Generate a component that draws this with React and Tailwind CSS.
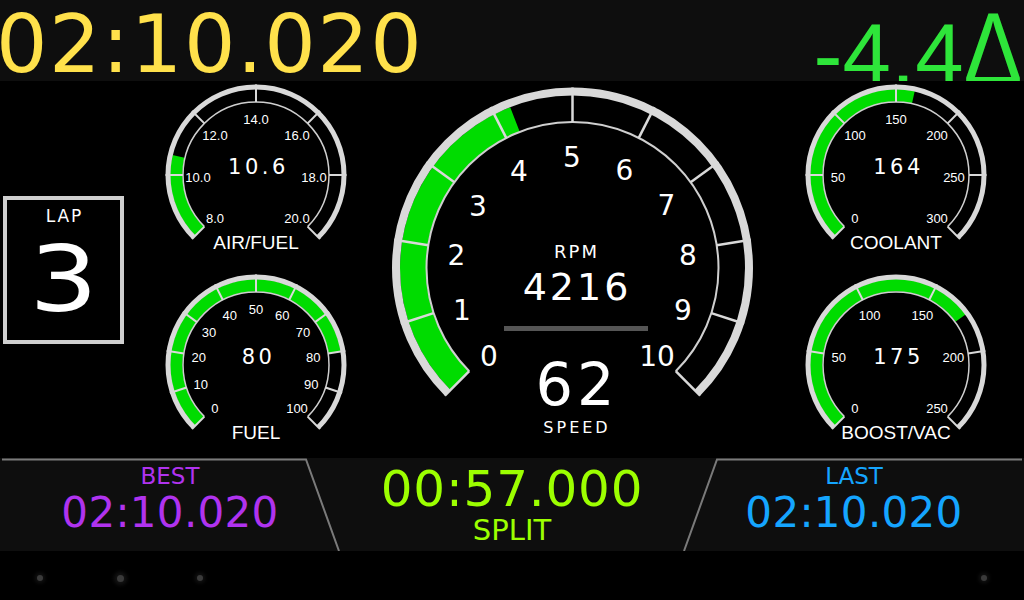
import React from "react";

const DJ = "'DejaVu Sans', sans-serif";
const LS = "'Liberation Sans', Arial, sans-serif";
const GREEN = "#00dc00";
const RIM = "#d9d9d9";
const INNER = "#cfcfcf";

function pt(cx, cy, r, deg) {
  const a = (deg * Math.PI) / 180;
  return [cx + r * Math.sin(a), cy - r * Math.cos(a)];
}
function arcPath(cx, cy, r, a1, a2) {
  const [x1, y1] = pt(cx, cy, r, a1);
  const [x2, y2] = pt(cx, cy, r, a2);
  const large = a2 - a1 > 180 ? 1 : 0;
  return `M${x1} ${y1} A${r} ${r} 0 ${large} 1 ${x2} ${y2}`;
}
function sector(cx, cy, r1, r2, a1, a2) {
  const [ox1, oy1] = pt(cx, cy, r2, a1);
  const [ox2, oy2] = pt(cx, cy, r2, a2);
  const [ix2, iy2] = pt(cx, cy, r1, a2);
  const [ix1, iy1] = pt(cx, cy, r1, a1);
  const large = a2 - a1 > 180 ? 1 : 0;
  return `M${ox1} ${oy1} A${r2} ${r2} 0 ${large} 1 ${ox2} ${oy2} L${ix2} ${iy2} A${r1} ${r1} 0 ${large} 0 ${ix1} ${iy1} Z`;
}

function SmallGauge({ h = 190, labels, frac, value, name }) {
  const cx = 95;
  const cy = 94;
  const n = labels.length - 1;
  const end = -135 + 270 * frac;
  return (
    <svg width="190" height={h} viewBox={`0 0 190 ${h}`} className="block shrink-0">
      <path d={sector(cx, cy, 73.5, 86, -135, end)} fill={GREEN} />
      <path d={arcPath(cx, cy, 88, -135, 135)} stroke={RIM} strokeWidth="5" fill="none" />
      <path d={arcPath(cx, cy, 73, -135, 135)} stroke={INNER} strokeWidth="1.5" fill="none" />
      {labels.map((l, i) => {
        const a = -135 + (270 * i) / n;
        const [x1, y1] = pt(cx, cy, 73, a);
        const [x2, y2] = pt(cx, cy, 90.5, a);
        const [lx, ly] = pt(cx, cy, 58, a);
        return (
          <g key={i}>
            <line x1={x1} y1={y1} x2={x2} y2={y2} stroke={RIM} strokeWidth="2" />
            <text x={lx} y={ly + 2} fill="#fff" fontFamily={LS} fontSize="13" textAnchor="middle" dominantBaseline="central">
              {l}
            </text>
          </g>
        );
      })}
      <text x={cx + 2.5} y={cy - 1.5} fill="#fff" fontFamily={DJ} fontSize="21" letterSpacing="3.5" textAnchor="middle">
        {value}
      </text>
      <text x={cx} y={cy + 74} fill="#fff" fontFamily={LS} fontSize="19" textAnchor="middle">
        {name}
      </text>
    </svg>
  );
}

const RPM_LABELS = [
  [-83.5, 88],
  [-110.5, 42],
  [-116, -12.5],
  [-94.5, -62],
  [-53.5, -97],
  [-0.5, -111],
  [52, -98],
  [94, -62.5],
  [115.5, -13],
  [110.5, 42.7],
  [84.5, 88.7],
];

function RpmGauge() {
  const cx = 185.5;
  const cy = 187;
  const rpm = 4216;
  const end = -135 + 270 * (rpm / 10000);
  return (
    <svg width="370" height="377" viewBox="0 0 370 377" className="block shrink-0">
      <path d={sector(cx, cy, 146.5, 172.5, -135, end)} fill={GREEN} />
      <path d={arcPath(cx, cy, 176.5, -135, 135)} stroke={RIM} strokeWidth="8" fill="none" />
      <path d={arcPath(cx, cy, 146, -135, 135)} stroke={INNER} strokeWidth="2" fill="none" />
      {RPM_LABELS.map(([dx, dy], i) => {
        const a = -135 + 27 * i;
        const [x1, y1] = pt(cx, cy, 146, a);
        const [x2, y2] = pt(cx, cy, 180.5, a);
        return (
          <g key={i}>
            <line x1={x1} y1={y1} x2={x2} y2={y2} stroke={RIM} strokeWidth="2.5" />
            <text x={cx + dx} y={cy + dy} fill="#fff" fontFamily={DJ} fontSize="28" textAnchor="middle" dominantBaseline="central">
              {i}
            </text>
          </g>
        );
      })}
      <text x="189.5" y="177" fill="#fff" fontFamily={DJ} fontSize="18" letterSpacing="2" textAnchor="middle">
        RPM
      </text>
      <text x="190" y="219" fill="#fff" fontFamily={DJ} fontSize="38" letterSpacing="3" textAnchor="middle">
        {rpm}
      </text>
      <rect x="117" y="245" width="144" height="5" fill="#555" />
      <text x="190" y="324" fill="#fff" fontFamily={DJ} fontSize="59" letterSpacing="4" textAnchor="middle">
        62
      </text>
      <text x="190" y="352" fill="#fff" fontFamily={DJ} fontSize="16" letterSpacing="3" textAnchor="middle">
        SPEED
      </text>
    </svg>
  );
}

export default function App() {
  return (
    <div className="w-[1024px] h-[600px] bg-black overflow-hidden flex flex-col font-['DejaVu_Sans',sans-serif] select-none">
      {/* Top bar */}
      <div className="h-[81px] shrink-0 bg-[#0e0e0e] flex justify-between overflow-hidden">
        <div className="mt-[4px] -ml-[4px] text-[81px] leading-none tracking-[1.5px] text-[#ffe14b] whitespace-nowrap">
          02:10.020
        </div>
        <div className="-mt-[3px] mr-[2px] text-[87px] leading-none text-[#2ee53a] whitespace-nowrap font-['Liberation_Sans',Arial,sans-serif]">
          -4.4
          <span className="inline-block text-[104px] leading-none origin-right scale-x-[0.85] -ml-[11px]">Δ</span>
        </div>
      </div>

      {/* Main */}
      <div className="h-[377px] shrink-0 flex bg-black">
        <div className="w-[161px] shrink-0 flex items-center">
          <div className="ml-[3px] w-[121px] h-[148px] border-4 border-[#d0d0d0] bg-black flex flex-col items-center text-white">
            <div className="mt-[8px] text-[17px] leading-none tracking-[2px] pl-[2px]">LAP</div>
            <div className="mt-[10px] text-[90px] leading-none inline-block scale-x-[1.2]">3</div>
          </div>
        </div>
        <div className="w-[190px] shrink-0 flex flex-col">
          <SmallGauge
            h={190}
            labels={["8.0", "10.0", "12.0", "14.0", "16.0", "18.0", "20.0"]}
            frac={(10.6 - 8) / 12}
            value="10.6"
            name="AIR/FUEL"
          />
          <SmallGauge
            h={187}
            labels={["0", "10", "20", "30", "40", "50", "60", "70", "80", "90", "100"]}
            frac={0.8}
            value="80"
            name="FUEL"
          />
        </div>
        <div className="w-[36px] shrink-0" />
        <RpmGauge />
        <div className="w-[44px] shrink-0" />
        <div className="w-[190px] shrink-0 flex flex-col">
          <SmallGauge
            h={190}
            labels={["0", "50", "100", "150", "200", "250", "300"]}
            frac={164 / 300}
            value="164"
            name="COOLANT"
          />
          <SmallGauge
            h={187}
            labels={["0", "50", "100", "150", "200", "250"]}
            frac={175 / 250}
            value="175"
            name="BOOST/VAC"
          />
        </div>
      </div>

      {/* Bottom bar */}
      <div className="relative h-[93px] shrink-0 bg-[#0e0e0e] grid grid-cols-[340px_344px_340px]">
        <svg className="absolute inset-0" width="1024" height="93" viewBox="0 0 1024 93">
          <polyline points="2,1.5 306,1.5 339,93" fill="none" stroke="#7a7a7a" strokeWidth="2" />
          <polyline points="1022,1.5 717,1.5 684,93" fill="none" stroke="#7a7a7a" strokeWidth="2" />
        </svg>
        <div className="relative flex flex-col items-center pt-[7px] text-[#b033ef]">
          <div className="text-[23px] leading-none">BEST</div>
          <div className="mt-[4px] text-[42px] leading-none tracking-[0.3px]">02:10.020</div>
        </div>
        <div className="relative flex flex-col items-center pt-[6px] text-[#9cff00]">
          <div className="text-[50px] leading-none tracking-[0.8px]">00:57.000</div>
          <div className="mt-[2px] text-[29px] leading-none">SPLIT</div>
        </div>
        <div className="relative flex flex-col items-center pt-[7px] text-[#15a5ff]">
          <div className="text-[23px] leading-none">LAST</div>
          <div className="mt-[4px] text-[42px] leading-none tracking-[0.3px]">02:10.020</div>
        </div>
      </div>

      {/* Bottom strip with dots */}
      <div className="flex-1 bg-black flex items-start pt-[24px] pl-[37px] pr-[37px]">
        <div className="w-[6px] h-[6px] rounded-full bg-[#3a3a3a] shadow-[0_0_4px_2px_#151515]" />
        <div className="ml-[74px] w-[7px] h-[7px] rounded-full bg-[#3a3a3a] shadow-[0_0_4px_3px_#151515]" />
        <div className="ml-[73px] w-[6px] h-[6px] rounded-full bg-[#3a3a3a] shadow-[0_0_4px_2px_#151515]" />
        <div className="ml-auto w-[6px] h-[6px] rounded-full bg-[#3a3a3a] shadow-[0_0_4px_2px_#151515]" />
      </div>
    </div>
  );
}
